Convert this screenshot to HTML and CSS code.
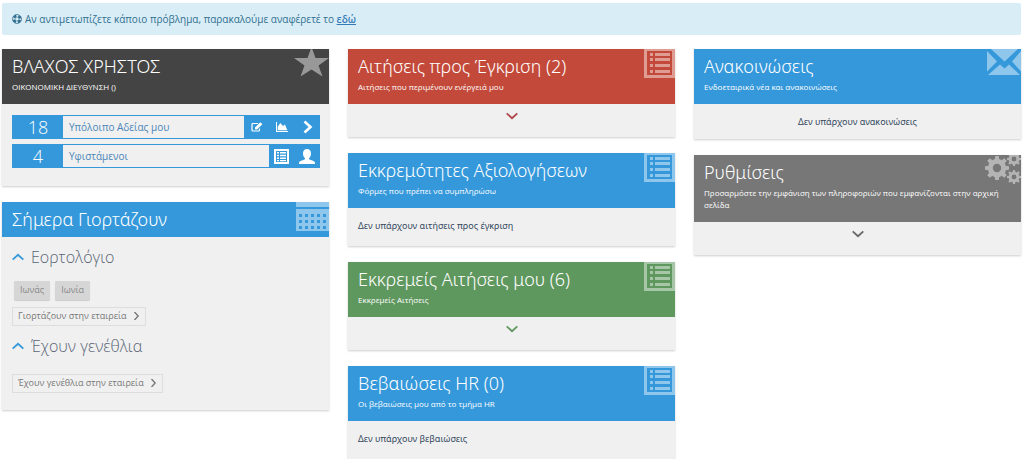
FILE: index.html
```html
<!DOCTYPE html>
<html lang="el">
<head>
<meta charset="utf-8">
<meta name="viewport" content="width=device-width, initial-scale=1">
<title>Αρχική σελίδα</title>
<link rel="stylesheet" href="styles.css">
</head>
<body>
<svg class="sprite" aria-hidden="true">
  <symbol id="list" viewBox="0 0 31 29">
    <path fill-rule="evenodd" d="M0 0H31V29H0ZM3 2V26H28V2Z"/>
    <path d="M6 4h3v3h-3zM11 4h15v3h-15zM6 9h3v3h-3zM11 9h15v3h-15zM6 15h3v3h-3zM11 15h15v3h-15zM6 21h3v3h-3zM11 21h15v3h-15z"/>
  </symbol>
  <symbol id="chevron" viewBox="0 0 12 8">
    <path d="M.7 1.300L6 6.200L11.300 1.300" fill="none" stroke="currentColor" stroke-width="1.800"/>
  </symbol>
  <symbol id="gear" viewBox="-12 -12 24 24">
    <circle r="6.7" fill="none" stroke="currentColor" stroke-width="5"/>
    <path d="M-2.3-8L-1.8-12H1.8L2.3-8ZM-2.3 8L-1.8 12H1.8L2.3 8ZM-8-2.3L-12-1.8V1.8L-8 2.3ZM8-2.3L12-1.8V1.8L8 2.3Z"/>
    <path transform="rotate(45)" d="M-2.3-8L-1.8-12H1.8L2.3-8ZM-2.3 8L-1.8 12H1.8L2.3 8ZM-8-2.3L-12-1.8V1.8L-8 2.3ZM8-2.3L12-1.8V1.8L8 2.3Z"/>
  </symbol>
</svg>

<div class="alert" role="status">
  <svg class="alert-icon" viewBox="0 0 12 12" aria-hidden="true"><circle cx="6" cy="6" r="3.9" fill="none" stroke="currentColor" stroke-width="3" stroke-dasharray="3.630 2.496" stroke-dashoffset="-1.248"/><circle cx="6" cy="6" r="5.400" fill="none" stroke="currentColor" stroke-width=".9"/><circle cx="6" cy="6" r="2.400" fill="none" stroke="currentColor" stroke-width=".7"/></svg>
  <p>Αν αντιμετωπίζετε κάποιο πρόβλημα, παρακαλούμε αναφέρετέ το <a href="#report">εδώ</a></p>
</div>

<main class="board">
  <div class="column">
    <section class="card">
      <header class="card-head dark">
        <h2>ΒΛΑΧΟΣ ΧΡΗΣΤΟΣ</h2>
        <p>ΟΙΚΟΝΟΜΙΚΗ ΔΙΕΥΘΥΝΣΗ ()</p>
        <svg class="corner star" viewBox="0 0 35 28" aria-hidden="true"><path d="M17.500-2L21.500 9H35L24.500 16.500L28.500 27.500L17.500 20.500L6.500 27.500L10.500 16.500L0 9H13.500Z"/></svg>
      </header>
      <div class="card-body stats">
        <div class="stat">
          <span class="count">18</span>
          <a class="label" href="#leave">Υπόλοιπο Αδείας μου</a>
          <span class="actions">
            <button type="button" aria-label="Νέα αίτηση"><svg width="12" height="10" viewBox="0 0 12 10"><path d="M7 1.500H2Q1 1.500 1 2.500V8Q1 9 2 9H7.500Q8.500 9 8.500 8V6.500" fill="none" stroke="currentColor" stroke-width="1.200"/><path d="M4 7.500V5.500L9.300.3L11.400 2.300L6 7.500Z"/></svg></button>
            <button type="button" aria-label="Γράφημα"><svg width="12" height="10" viewBox="0 0 12 10"><path d="M0 0H1V9H12V10H0ZM1.700 8.200V4.800L4.300 1L7 4L9 2.500L11.300 8.200Z"/></svg></button>
            <button type="button" aria-label="Προβολή"><svg width="12" height="14" viewBox="0 0 12 14"><path d="M3.500 1.500L9.500 7L3.500 12.500" fill="none" stroke="currentColor" stroke-width="2.600"/></svg></button>
          </span>
        </div>
        <div class="stat">
          <span class="count">4</span>
          <a class="label" href="#team">Υφιστάμενοι</a>
          <span class="actions">
            <button type="button" aria-label="Λίστα"><svg width="15" height="15" viewBox="0 0 15 15"><path fill-rule="evenodd" d="M0 0H15V15H0ZM2 2V13H13V2Z"/><path d="M3 3h2v1.500h-2zM6 3h6v1.500h-6zM3 5.700h2v1.500h-2zM6 5.700h6v1.500h-6zM3 8.400h2v1.500h-2zM6 8.400h6v1.500h-6zM3 11h2v1.200h-2zM6 11h6v1.200h-6z"/></svg></button>
            <button type="button" aria-label="Χρήστης"><svg width="16" height="15" viewBox="0 0 16 15"><path d="M8 0C10.500 0 12 1.800 12 4.200C12 6.500 11.200 8.300 10 9.300V10.300L14.500 12Q16 12.700 16 14V15H0V14Q0 12.700 1.500 12L6 10.300V9.300C4.800 8.300 4 6.500 4 4.200C4 1.800 5.500 0 8 0Z"/></svg></button>
          </span>
        </div>
      </div>
    </section>

    <section class="card">
      <header class="card-head blue short">
        <h2>Σήμερα Γιορτάζουν</h2>
        <svg class="corner calendar" viewBox="0 0 33 29" aria-hidden="true"><path d="M0 0H33V5H0Z"/><path fill-rule="evenodd" d="M0 7H33V29H0ZM3 12v3h3v-3zM9 12v3h3v-3zM15 12v3h3v-3zM21 12v3h3v-3zM27 12v3h3v-3zM3 18v3h3v-3zM9 18v3h3v-3zM15 18v3h3v-3zM21 18v3h3v-3zM27 18v3h3v-3zM3 24v3h3v-3zM9 24v3h3v-3zM15 24v3h3v-3zM21 24v3h3v-3zM27 24v3h3v-3z"/></svg>
      </header>
      <div class="card-body feasts">
        <h3><svg class="chevron up" aria-hidden="true"><use href="#chevron"/></svg>Εορτολόγιο</h3>
        <div class="names"><span>Ιωνάς</span><span>Ιωνία</span></div>
        <button class="more" type="button">Γιορτάζουν στην εταιρεία<svg class="chevron right" aria-hidden="true"><use href="#chevron"/></svg></button>
        <h3><svg class="chevron up" aria-hidden="true"><use href="#chevron"/></svg>Έχουν γενέθλια</h3>
        <button class="more birthdays" type="button">Έχουν γενέθλια στην εταιρεία<svg class="chevron right" aria-hidden="true"><use href="#chevron"/></svg></button>
      </div>
    </section>
  </div>

  <div class="column">
    <section class="card">
      <header class="card-head red">
        <h2>Αιτήσεις προς Έγκριση (2)</h2>
        <p>Αιτήσεις που περιμένουν ενέργειά μου</p>
        <svg class="corner list" aria-hidden="true"><use href="#list"/></svg>
      </header>
      <button class="expand red-ink" type="button" aria-label="Εμφάνιση"><svg class="chevron" aria-hidden="true"><use href="#chevron"/></svg></button>
    </section>
    <section class="card">
      <header class="card-head blue">
        <h2>Εκκρεμότητες Αξιολογήσεων</h2>
        <p>Φόρμες που πρέπει να συμπληρώσω</p>
        <svg class="corner list" aria-hidden="true"><use href="#list"/></svg>
      </header>
      <p class="card-body note">Δεν υπάρχουν αιτήσεις προς έγκριση</p>
    </section>
    <section class="card">
      <header class="card-head green">
        <h2>Εκκρεμείς Αιτήσεις μου (6)</h2>
        <p>Εκκρεμείς Αιτήσεις</p>
        <svg class="corner list" aria-hidden="true"><use href="#list"/></svg>
      </header>
      <button class="expand green-ink" type="button" aria-label="Εμφάνιση"><svg class="chevron" aria-hidden="true"><use href="#chevron"/></svg></button>
    </section>
    <section class="card">
      <header class="card-head blue">
        <h2>Βεβαιώσεις HR (0)</h2>
        <p>Οι βεβαιώσεις μου από το τμήμα HR</p>
        <svg class="corner list" aria-hidden="true"><use href="#list"/></svg>
      </header>
      <p class="card-body note">Δεν υπάρχουν βεβαιώσεις</p>
    </section>
  </div>

  <div class="column">
    <section class="card">
      <header class="card-head blue">
        <h2>Ανακοινώσεις</h2>
        <p>Ενδοεταιρικά νέα και ανακοινώσεις</p>
        <svg class="corner mail" viewBox="0 0 34 26" aria-hidden="true"><path d="M4 0H31L17.500 12.500ZM0 2L10 12.500L0 22.500ZM34 2V22.500L25 12.500ZM1 26L13 15.500L17.500 19.500L22 15.500L33 26Z"/></svg>
      </header>
      <p class="card-body note centered">Δεν υπάρχουν ανακοινώσεις</p>
    </section>
    <section class="card">
      <header class="card-head gray">
        <h2>Ρυθμίσεις</h2>
        <p>Προσαρμόστε την εμφάνιση των πληροφοριών που εμφανίζονται στην αρχική σελίδα</p>
        <svg class="corner gears" viewBox="0 0 37 29" aria-hidden="true"><use href="#gear" x="0" y="1" width="26" height="24"/><use href="#gear" x="23" y="-3" width="14" height="14"/><use href="#gear" x="23" y="15" width="14" height="14"/></svg>
      </header>
      <button class="expand gray-ink" type="button" aria-label="Εμφάνιση"><svg class="chevron" aria-hidden="true"><use href="#chevron"/></svg></button>
    </section>
  </div>
</main>
</body>
</html>
```
FILE: styles.css
```css
* { box-sizing: border-box; }
body {
  margin: 0;
  padding: 3px 3px 0 2px;
  background: #fff;
  color: #34495e;
  font-family: "Open Sans", "Noto Sans", sans-serif;
  font-size: 9px;
  line-height: 12px;
}
h2, h3, p { margin: 0; }
button {
  margin: 0;
  padding: 0;
  border: 0;
  background: none;
  color: inherit;
  font: inherit;
  cursor: pointer;
}
svg { fill: currentColor; flex: none; }
.sprite { display: none; }

.alert {
  display: flex;
  align-items: center;
  gap: 3px;
  padding: 8px 10px;
  border-radius: 2px;
  background: #d9edf7;
  color: #31708f;
  font-size: 10px;
  line-height: 16px;
}
.alert-icon { width: 10px; height: 10px; }
.alert a { color: #337ab7; font-weight: 600; text-decoration: underline; }

.board {
  display: grid;
  grid-template-columns: repeat(3, minmax(0, 1fr));
  gap: 19px;
  padding-top: 14px;
}
.column { display: flex; flex-direction: column; gap: 16px; }
.card { background: #f0f0f0; box-shadow: 0 1px 2px rgba(0, 0, 0, .2); }

.card-head {
  position: relative;
  padding: 5px 9px 11px 10px;
  color: #fff;
}
.card-head h2, .note { font-family: "Noto Sans", "Open Sans", sans-serif; }
.card-head h2 { font-size: 18px; font-weight: 300; line-height: 24px; }
.card-head p { padding-top: 3px; font-size: 8px; }
.card-head.short { padding-bottom: 6px; }
.dark { background: #444; }
.blue { background: #3498db; }
.red { background: #c34a3a; }
.green { background: #5f985f; }
.gray { background: #777; }

.corner { position: absolute; top: 0; right: 0; opacity: .45; }
.star { width: 35px; height: 28px; }
.calendar { width: 33px; height: 29px; }
.list { width: 31px; height: 29px; }
.mail { width: 34px; height: 26px; }
.gears { width: 37px; height: 29px; }

.chevron { width: 12px; height: 8px; }
.up { transform: rotate(180deg); color: #3498db; }
.right { transform: rotate(-90deg); width: 9px; }

.expand { display: flex; justify-content: center; width: 100%; padding: 8px 0 17px; }
.red-ink { color: #b0454a; }
.green-ink { color: #5f985f; }
.gray-ink { color: #666; }

.note { padding: 12px 10px 14px; }
.centered { padding-bottom: 11px; text-align: center; }

.stats { display: flex; flex-direction: column; gap: 5px; padding: 11px 9px 18px 10px; }
.stat { display: flex; height: 24px; border: 1px solid #3498db; color: #fff; background: #3498db; }
.count { width: 50px; font-size: 18px; font-weight: 300; line-height: 22px; text-align: center; }
.label {
  flex: 1;
  padding-left: 6px;
  background: #f0f0f0;
  color: #4a86b8;
  font-size: 10px;
  line-height: 22px;
  text-decoration: none;
}
.actions { display: flex; }
.actions button { display: flex; align-items: center; justify-content: center; width: 25px; }

.feasts { display: flex; flex-direction: column; align-items: flex-start; padding: 8px 10px 17px; }
.feasts h3 {
  display: flex;
  align-items: center;
  gap: 7px;
  color: #596575;
  font-size: 16px;
  font-weight: 300;
  line-height: 24px;
}
.names { display: flex; gap: 5px; padding: 12px 2px 7px; }
.names span {
  padding: 3px 6px 4px;
  border-radius: 1px;
  background: #d6d6d6;
  box-shadow: 0 1px 1px rgba(0, 0, 0, .15);
  color: #888;
}
.more {
  display: flex;
  align-items: center;
  gap: 5px;
  margin-bottom: 8px;
  padding: 2px 4px 3px 5px;
  border: 1px solid #ddd;
  color: #777;
}
.birthdays { margin: 16px 0 0; }
```
